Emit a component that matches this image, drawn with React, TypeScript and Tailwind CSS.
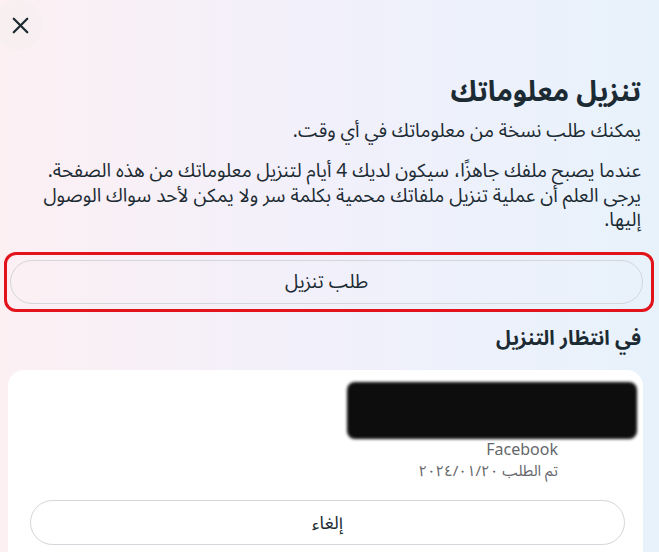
import { X } from "lucide-react";

export default function App() {
  return (
    <div
      dir="rtl"
      className="h-[552px] w-[659px] overflow-hidden bg-gradient-to-r from-[#fcf0f3] via-[#f1f0fb] to-[#e8f2fb] text-[#1c2b33]"
      style={{ fontFamily: '"Noto Sans", "Noto Sans Arabic", "DejaVu Sans", sans-serif' }}
    >
      {/* close */}
      <div className="flex h-[50px] justify-end">
        <button className="ml-[-6px] flex h-[50px] w-[48px] items-center justify-center rounded-full bg-[#f5eeee]/60">
          <X className="ml-[4px] h-[27px] w-[27px] text-[#1c2b33]" strokeWidth={2} />
        </button>
      </div>

      <div className="pr-[18px] pl-[10px]">
        <h1 className="mt-[24px] text-[28px] leading-[32px] font-bold">تنزيل معلوماتك</h1>
        <p className="mt-[12px] text-[19px] leading-[24px]">يمكنك طلب نسخة من معلوماتك في أي وقت.</p>
        <p className="mt-[16px] text-[19px] leading-[24.5px]">
          عندما يصبح ملفك جاهزًا، سيكون لديك 4 أيام لتنزيل معلوماتك من هذه الصفحة.
          <br />
          يرجى العلم أن عملية تنزيل ملفاتك محمية بكلمة سر ولا يمكن لأحد سواك الوصول إليها.
        </p>
      </div>

      {/* highlighted request button */}
      <div className="mt-[20px] mr-[5px] ml-[4px] rounded-[12px] border-[3px] border-[#e2131b] pt-[5px] pr-[8px] pb-[5px] pl-[3px]">
        <button className="flex h-[44px] w-full items-center justify-center rounded-full border border-[#d3d6db] text-[19px]">
          طلب تنزيل
        </button>
      </div>

      <h2 className="mt-[12px] pr-[18px] text-[20px] leading-[28px] font-bold">في انتظار التنزيل</h2>

      <div className="mt-[18px] mr-[16px] ml-[8px] h-[200px] rounded-[16px] bg-white pt-[12px]">
        <div className="flex justify-start pr-[6px]">
          <div className="h-[57px] w-[290px] rounded-[8px] bg-[#0d0d0d] blur-[1.5px]" />
        </div>
        <div className="pr-[85px] text-[15px] leading-[21px] text-[#65676b]">
          <div className="text-[16px]">Facebook</div>
          <div>تم الطلب ٢٠٢٤/٠١/٢٠</div>
        </div>
        <div className="mt-[19px] mr-[18px] ml-[22px]">
          <button className="flex h-[45px] w-full items-center justify-center rounded-full border border-[#d3d6db] text-[18px]">
            إلغاء
          </button>
        </div>
      </div>
    </div>
  );
}
